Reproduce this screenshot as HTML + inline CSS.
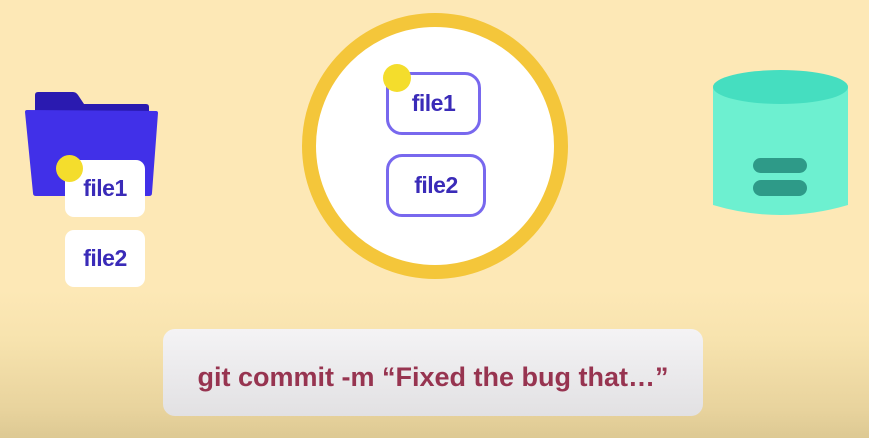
<!DOCTYPE html>
<html><head><style>
html,body{margin:0;padding:0}
body{width:869px;height:438px;overflow:hidden;position:relative;font-family:"Liberation Sans",sans-serif;
background:linear-gradient(to bottom,#fde8b6 0px,#fde8b6 290px,#f7e3ae 340px,#e8d39d 410px,#ddc993 438px);}
.abs{position:absolute}
.card{position:absolute;background:#fff;border-radius:9px;color:#3a2bb8;font-weight:bold;font-size:23px;display:flex;align-items:center;justify-content:center;letter-spacing:-0.5px}
.ob{position:absolute;background:#fff;border:3px solid #7868ee;border-radius:16px;color:#3a2bb8;font-weight:bold;font-size:23px;display:flex;align-items:center;justify-content:center;box-sizing:border-box;letter-spacing:-0.5px}
.dot{position:absolute;border-radius:50%;background:#f4dd2c}
</style></head><body>
<svg class="abs" style="left:0;top:0" width="200" height="300">
<path d="M35 95 Q35 92 38 92 L73 92 Q76 92 78 95 L84 104 L146 104 Q149 104 149 107 L149 120 L35 120 Z" fill="#2a1ab0"/>
<path d="M25 112 Q25 110 27 110 L156 111 Q158 111 158 113 L152 193 Q152 196 149 196 L36 196 Q33 196 33 193 Z" fill="#4130e8"/>
</svg>
<div class="card" style="left:65px;top:160px;width:80px;height:57px">file1</div>
<div class="card" style="left:65px;top:230px;width:80px;height:57px">file2</div>
<div class="dot" style="left:56px;top:155px;width:27px;height:27px"></div>
<div class="abs" style="left:302px;top:13px;width:238px;height:238px;border:14px solid #f4c63a;border-radius:50%;background:#fff"></div>
<div class="ob" style="left:386px;top:72px;width:95px;height:63px">file1</div>
<div class="ob" style="left:386px;top:154px;width:100px;height:63px">file2</div>
<div class="dot" style="left:383px;top:64px;width:28px;height:28px"></div>
<svg class="abs" style="left:700px;top:50px" width="169" height="190">
<path d="M13 37 L13 155 Q80 175 148 155 L148 37 Z" fill="#6df0d0"/>
<ellipse cx="80.5" cy="37" rx="67.5" ry="17" fill="#45dec0"/>
<rect x="53" y="108" width="54" height="15" rx="7.5" fill="#2e9a88"/>
<rect x="53" y="130" width="54" height="16" rx="8" fill="#2e9a88"/>
</svg>
<div class="abs" style="left:163px;top:329px;width:540px;height:87px;box-sizing:border-box;padding-top:10px;border-radius:12px;background:linear-gradient(to bottom,#f4f3f5,#e2e1e3);display:flex;align-items:center;justify-content:center;color:#973450;font-size:27px;font-weight:bold;letter-spacing:0px">git commit -m “Fixed the bug that…”</div>
</body></html>
